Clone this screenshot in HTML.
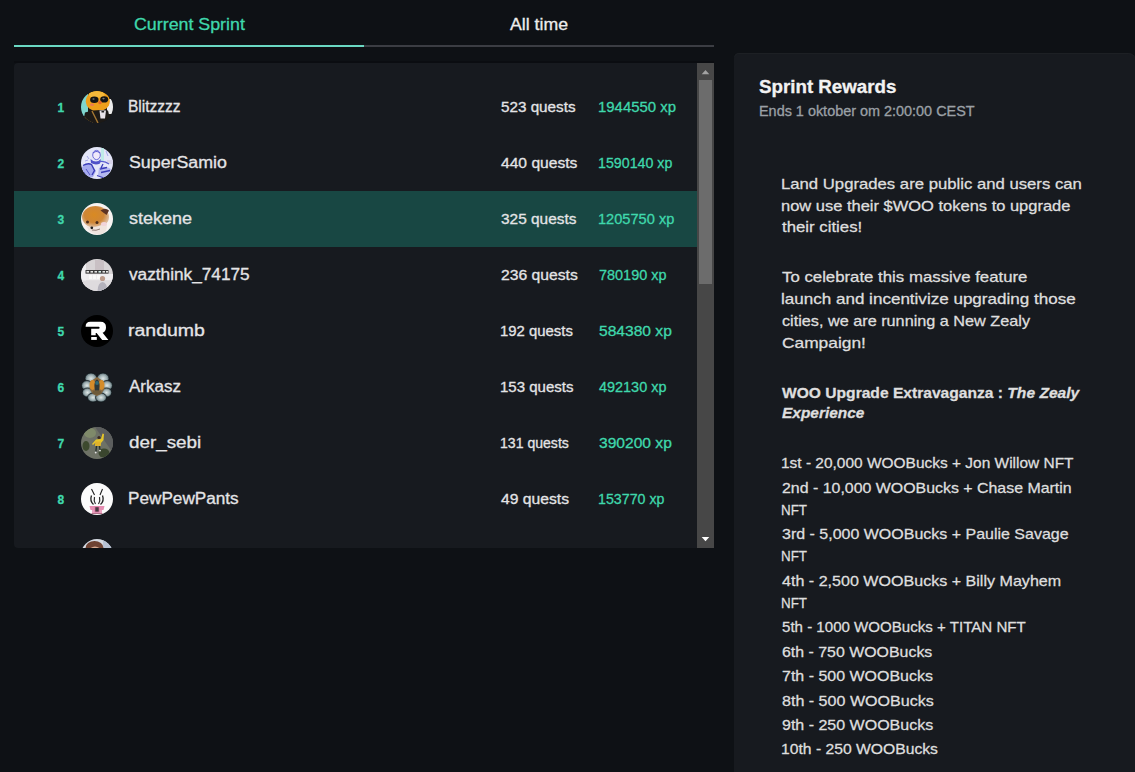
<!DOCTYPE html>
<html><head><meta charset="utf-8">
<style>
*{box-sizing:border-box;margin:0;padding:0}
html,body{width:1135px;height:772px;overflow:hidden;background:#0e1115;font-family:"Liberation Sans",sans-serif;color:#e4e4e6}
.t{position:absolute;white-space:pre;transform-origin:0 0;-webkit-text-stroke:0.3px currentColor}
.tab{font-size:17px;line-height:20px}
.ul{position:absolute;top:45px;height:2px}
.board{position:absolute;left:14px;top:63px;width:700px;height:485px;background:#171a1f;overflow:hidden;border-radius:4px 0 0 4px}
.hl{position:absolute;left:0;top:128px;width:683px;height:56px;background:#184743}
.rank{font-size:12px;font-weight:bold;color:#3fd8ac;line-height:14px}
.av{position:absolute;left:67px;width:32px;height:32px}
.av svg{display:block}
.name{font-size:16px;line-height:18px}
.q{font-size:15px;line-height:17px}
.xp{font-size:15px;line-height:17px;color:#3fd8ac}
.sb{position:absolute;left:683px;top:0;width:17px;height:485px;background:#474747}
.thumb{position:absolute;left:2px;top:17px;width:13px;height:204px;background:#6c6c6c}
.rp{position:absolute;left:734px;top:53px;box-shadow:inset 0 1px 0 #1d2024;width:402px;height:760px;background:#171a1f;border-radius:5px 8px 8px 8px}
.rt{font-size:18px;font-weight:bold;color:#f2f2f2;line-height:20px}
.rs{font-size:14px;color:#9ba0a6;line-height:16px}
.bl{font-size:15px;line-height:17px;color:#dedede}
</style></head><body>

<div class="t tab" style="left:133.7px;top:14.5px;color:#3fd8ac;transform:scaleX(1.047704081632653)">Current Sprint</div>
<div class="t tab" style="left:509.6px;top:14.5px;color:#ececec;transform:scaleX(1.0404905777795066)">All time</div>
<div class="ul" style="left:14px;width:350px;background:#6ad8c2"></div><div class="ul" style="left:364px;width:350px;background:#3b3d43"></div>
<div style="position:absolute;left:14px;top:61px;width:700px;height:2px;background:#0b0d11"></div>
<div class="board"><div class="hl"></div>
<div class="t rank" style="left:43.5px;top:37.6px">1</div>
<div class="av" style="top:28px"><svg width="32" height="32" viewBox="0 0 32 32"><defs><clipPath id="c1"><circle cx="16" cy="16" r="16"/></clipPath></defs><g clip-path="url(#c1)">
<rect width="32" height="32" fill="#1c1a18"/>
<rect x="0" y="3" width="7" height="22" fill="#7fd6cf"/>
<rect x="26" y="8" width="6" height="15" fill="#ececec"/>
<ellipse cx="16.8" cy="10.2" rx="12" ry="10.2" fill="#ee9f1a"/>
<ellipse cx="15.5" cy="3.5" rx="8" ry="3.5" fill="#f4b83a"/>
<ellipse cx="13.3" cy="8.8" rx="4.2" ry="3.2" fill="#141414"/>
<ellipse cx="23.2" cy="8.4" rx="4" ry="3.1" fill="#141414"/>
<ellipse cx="12.5" cy="8" rx="1.2" ry="0.8" fill="#777"/>
<ellipse cx="22.5" cy="7.6" rx="1.2" ry="0.8" fill="#777"/>
<circle cx="19" cy="11.5" r="1.8" fill="#e3652a"/>
<ellipse cx="11" cy="13.8" rx="2" ry="1.3" fill="#ec7a52"/>
<path d="M2 32 L4 21.5 Q14 18 27 19.5 L30 32Z" fill="#1d1a17"/>
<path d="M11 20 L17 32" stroke="#a87a34" stroke-width="1.4" fill="none"/>
<path d="M18.5 19.5 H25 L24 27.5 H19.5Z" fill="#e9e4e8"/>
<rect x="20.5" y="20" width="2.6" height="1.5" fill="#222"/>
<path d="M3 26 Q7 31 12 32" stroke="#c8963e" stroke-width="1.2" fill="none"/>
</g></svg></div>
<div class="t name" style="left:113.6px;top:34.5px;transform:scaleX(0.9702507971399237)">Blitzzzz</div>
<div class="t q" style="left:487.0px;top:34.6px;transform:scaleX(1.01515170760873)">523 quests</div>
<div class="t xp" style="left:584.4px;top:34.6px;transform:scaleX(0.9950090265958104)">1944550 xp</div>
<div class="t rank" style="left:43.5px;top:93.6px">2</div>
<div class="av" style="top:84px"><svg width="32" height="32" viewBox="0 0 32 32"><defs><clipPath id="c2"><circle cx="16" cy="16" r="16"/></clipPath></defs><g clip-path="url(#c2)">
<rect width="32" height="32" fill="#e4e6f8"/>
<rect x="20" y="1" width="3" height="13" fill="#bfeae8"/>
<rect x="26" y="13" width="6" height="4" fill="#d8d4ea"/>
<ellipse cx="15.5" cy="8" rx="3.8" ry="4.6" fill="#f0eafa" stroke="#6c6cd8" stroke-width="1"/>
<path d="M12 6 Q15.5 3 19 6" stroke="#5a5ad0" stroke-width="1.2" fill="none"/>
<path d="M9.5 12 Q15 17 20 12 L19 16.5 Q14.5 18.5 10 16Z" fill="#4e50c8"/>
<path d="M1 20 Q6 15.5 10 17 L15 24 L12 30 L4 32 L1 32Z" fill="#a6aaee"/>
<path d="M2 18.5 Q7 15.5 10.5 17.5 L13.5 23.5 L11 28" stroke="#3a3cb8" stroke-width="1.4" fill="none"/>
<path d="M5 22 L9 28 M3 25 L6 31" stroke="#5456c8" stroke-width="1"/>
<path d="M17 15 Q23 13 28 17" stroke="#5a5cd0" stroke-width="1.1" fill="none"/>
<path d="M18 21 Q24 18 30 22 L28 29 Q22 32 17 28Z" fill="#b4b8f0"/>
<path d="M19 22 L26 20.5 M20 25.5 L29 23.5 M16 28.5 L23 31 M22 17 L20 21" stroke="#3a3cb8" stroke-width="1.3"/>
<path d="M6 9 L8 12 M25 4 L27 9 M4 14 L7 13" stroke="#9c9ee6" stroke-width="0.9"/>
</g></svg></div>
<div class="t name" style="left:114.6px;top:90.5px;transform:scaleX(1.1117678134958178)">SuperSamio</div>
<div class="t q" style="left:487.0px;top:90.6px;transform:scaleX(1.0410958904109588)">440 quests</div>
<div class="t xp" style="left:584.4px;top:90.6px;transform:scaleX(0.948051948051948)">1590140 xp</div>
<div class="t rank" style="left:43.5px;top:149.6px">3</div>
<div class="av" style="top:140px"><svg width="32" height="32" viewBox="0 0 32 32"><defs><clipPath id="c3"><circle cx="16" cy="16" r="16"/></clipPath><radialGradient id="g3" cx="0.45" cy="0.4" r="0.55"><stop offset="0" stop-color="#d98a22"/><stop offset="0.65" stop-color="#cf8636"/><stop offset="1" stop-color="#dcb896"/></radialGradient></defs><g clip-path="url(#c3)">
<rect width="32" height="32" fill="#f7f3f1"/>
<ellipse cx="14.5" cy="14" rx="13.5" ry="11" fill="url(#g3)"/>
<path d="M19.5 7.5 Q24 4 28 7.5 L25.5 12Z" fill="#5d3322"/>
<path d="M5 23 Q14 26 25 20 Q28 27 21 31 Q10 33 5 23Z" fill="#efe4de"/>
<ellipse cx="23" cy="21" rx="3" ry="2" fill="#f1d4da"/>
<circle cx="6.5" cy="19" r="1.5" fill="#4a2b1a"/><circle cx="16" cy="19.5" r="1.5" fill="#4a2b1a"/>
<circle cx="10.8" cy="24.8" r="1.4" fill="#1d1d1d"/>
<path d="M11 27 Q15 28 19 26" stroke="#6a5048" stroke-width="0.7" fill="none"/>
</g></svg></div>
<div class="t name" style="left:114.6px;top:146.5px;transform:scaleX(1.1247646790550276)">stekene</div>
<div class="t q" style="left:487.0px;top:146.6px;transform:scaleX(1.0275799411523998)">325 quests</div>
<div class="t xp" style="left:584.4px;top:146.6px;transform:scaleX(0.9738573407202216)">1205750 xp</div>
<div class="t rank" style="left:43.5px;top:205.6px">4</div>
<div class="av" style="top:196px"><svg width="32" height="32" viewBox="0 0 32 32"><defs><clipPath id="c4"><circle cx="16" cy="16" r="16"/></clipPath></defs><g clip-path="url(#c4)">
<rect width="32" height="32" fill="#d8d4d6"/>
<rect x="0" y="0" width="5" height="32" fill="#f0eff2"/>
<rect x="14" y="1" width="9" height="10" fill="#c9c0c4"/>
<rect x="5" y="15" width="27" height="6.5" fill="#efedf0"/>
<rect x="0" y="21.5" width="32" height="11" fill="#dedbde"/>
<rect x="4.5" y="11" width="23" height="3.6" fill="#3b3a3c"/>
<rect x="5.5" y="12" width="2.5" height="1.6" fill="#e6e6e6"/><rect x="9.5" y="12" width="2.5" height="1.6" fill="#e6e6e6"/><rect x="13.5" y="12" width="2.5" height="1.6" fill="#e6e6e6"/><rect x="17.5" y="12" width="2.5" height="1.6" fill="#d6eeea"/><rect x="21.5" y="12" width="2.5" height="1.6" fill="#e6e6e6"/><rect x="25" y="12" width="2" height="1.6" fill="#e6e6e6"/>
<rect x="8" y="16" width="3" height="4" fill="#fafafa"/><rect x="12" y="16" width="3" height="4" fill="#fafafa"/><rect x="16" y="16" width="3" height="4" fill="#fafafa"/>
<circle cx="21.5" cy="19.5" r="2.6" fill="#bc9a8a"/>
<path d="M16.5 32 Q17 23.5 21.5 23 Q26 23.5 26.5 32Z" fill="#b4b2bc"/>
</g></svg></div>
<div class="t name" style="left:114.6px;top:202.5px;transform:scaleX(1.0759854819626258)">vazthink_74175</div>
<div class="t q" style="left:487.0px;top:202.6px;transform:scaleX(1.0453933566965388)">236 quests</div>
<div class="t xp" style="left:585.4px;top:202.6px;transform:scaleX(0.9629087342822503)">780190 xp</div>
<div class="t rank" style="left:43.5px;top:261.6px">5</div>
<div class="av" style="top:252px"><svg width="32" height="32" viewBox="0 0 32 32"><circle cx="16" cy="16" r="16" fill="#000"/>
<path d="M4.6 11.7 Q4.6 6.8 9.5 6.8 H19.5 Q25 6.8 25 12.3 Q25 16.6 21.6 17.7 L27.4 24.9 H21.2 L15.6 17.9 H14.7 V20.3 H10.2 V13.8 H17.6 Q18.6 13.8 18.6 12.75 Q18.6 11.7 17.6 11.7 Z" fill="#fff"/>
<rect x="10.2" y="22" width="5.6" height="2.9" fill="#fff"/>
</svg></div>
<div class="t name" style="left:113.6px;top:258.5px;transform:scaleX(1.2180090075802825)">randumb</div>
<div class="t q" style="left:486.0px;top:258.6px;transform:scaleX(0.9934900493816834)">192 quests</div>
<div class="t xp" style="left:585.4px;top:258.6px;transform:scaleX(1.0395923115721075)">584380 xp</div>
<div class="t rank" style="left:43.5px;top:317.6px">6</div>
<div class="av" style="top:308px"><svg width="32" height="32" viewBox="0 0 32 32"><defs><radialGradient id="p6" cx="0.5" cy="0.5" r="0.6"><stop offset="0" stop-color="#dfe7e6"/><stop offset="0.5" stop-color="#9fb0b3"/><stop offset="1" stop-color="#33444c"/></radialGradient></defs>
<g fill="url(#p6)" stroke="#0a1316" stroke-width="0.7">
<ellipse cx="10" cy="7.5" rx="6" ry="5.5"/><ellipse cx="22" cy="7.5" rx="6" ry="5.5"/>
<ellipse cx="6" cy="14.5" rx="5.5" ry="5"/><ellipse cx="26" cy="14.5" rx="5.5" ry="5"/>
<ellipse cx="6.5" cy="21.5" rx="5.2" ry="4.6"/><ellipse cx="25.5" cy="21.5" rx="5.2" ry="4.6"/>
<ellipse cx="12" cy="26.5" rx="5.5" ry="4.5"/><ellipse cx="20" cy="26.5" rx="5.5" ry="4.5"/>
</g>
<path d="M16 6 L22 10 L23.5 18 L20 23 L16 25 L12 23 L8.5 18 L10 10Z" fill="#8a6a40"/>
<ellipse cx="11.5" cy="14" rx="3" ry="5" fill="#d48c2a"/>
<ellipse cx="20.5" cy="14" rx="3" ry="5" fill="#d48c2a"/>
<ellipse cx="16" cy="15" rx="2.6" ry="6.5" fill="#2e3838"/>
<circle cx="16" cy="12" r="1.9" fill="#2f6a78"/>
<ellipse cx="16" cy="21.5" rx="4.5" ry="2.2" fill="#6d5a3a"/>
</svg></div>
<div class="t name" style="left:114.6px;top:314.5px;transform:scaleX(1.0612244897959184)">Arkasz</div>
<div class="t q" style="left:486.0px;top:314.6px;transform:scaleX(1.0011636687669432)">153 quests</div>
<div class="t xp" style="left:585.4px;top:314.6px;transform:scaleX(0.9627004927739712)">492130 xp</div>
<div class="t rank" style="left:43.5px;top:373.6px">7</div>
<div class="av" style="top:364px"><svg width="32" height="32" viewBox="0 0 32 32"><defs><clipPath id="c7"><circle cx="16" cy="16" r="16"/></clipPath></defs><g clip-path="url(#c7)">
<rect width="32" height="32" fill="#6e7266"/>
<path d="M14 0 H32 V26 Z" fill="#5c5e5e"/>
<ellipse cx="9" cy="6" rx="6" ry="5" fill="#7f8a6a"/>
<ellipse cx="5" cy="19" rx="3.5" ry="5" fill="#3d4a2e"/>
<ellipse cx="23" cy="26" rx="5.5" ry="4.5" fill="#3a462e"/>
<path d="M11 17 L15 12.5 L20 12 L21.5 6.5 L23 7 L22.5 13 L20 16 L19.5 19 L14 19 L14.5 15.5 L12 18Z" fill="#e6c62a"/>
<rect x="14.5" y="14.5" width="5" height="4.5" fill="#e0b22a"/>
<path d="M15.5 19 L14.8 25 M18.5 19 L19 23" stroke="#25302a" stroke-width="1.3"/>
<circle cx="14.7" cy="25.5" r="0.9" fill="#e6e6e6"/><circle cx="19" cy="23.6" r="0.9" fill="#e6e6e6"/>
<circle cx="18" cy="10.5" r="1.6" fill="#3a2a22"/>
</g></svg></div>
<div class="t name" style="left:114.6px;top:370.5px;transform:scaleX(1.175403111310808)">der_sebi</div>
<div class="t q" style="left:486.0px;top:370.6px;transform:scaleX(0.937757243989231)">131 quests</div>
<div class="t xp" style="left:585.4px;top:370.6px;transform:scaleX(1.0395923115721075)">390200 xp</div>
<div class="t rank" style="left:43.5px;top:429.6px">8</div>
<div class="av" style="top:420px"><svg width="32" height="32" viewBox="0 0 32 32"><circle cx="16" cy="16" r="16" fill="#fbfbfb"/>
<path d="M10.5 6 L13.5 12 M21.5 6 L19 12" stroke="#1e1e1e" stroke-width="1.1" fill="none"/>
<path d="M10.5 12.5 Q8.5 18 12.5 21.5" stroke="#222" stroke-width="1.3" fill="none"/>
<path d="M21.5 12.5 Q23.5 18 19.5 21.5" stroke="#222" stroke-width="1.3" fill="none"/>
<path d="M13.5 14 Q12.5 18 14.5 21 M18.5 14 Q19.5 18 17.5 21" stroke="#2a2a2a" stroke-width="1.2" fill="none"/>
<path d="M8.5 23 H23.5 L22.5 27 H9.5Z" fill="#e48db1"/>
<path d="M11 27 H21 V30 H11Z" fill="#eaa2c0"/>
<rect x="13.5" y="23.5" width="5" height="6" fill="#d97aa3"/>
<rect x="14.3" y="24.2" width="3.4" height="4.4" fill="#4a3a40"/>
<rect x="10.5" y="30" width="11" height="1" fill="#b07088"/>
</svg></div>
<div class="t name" style="left:113.6px;top:426.5px;transform:scaleX(1.0729719236048754)">PewPewPants</div>
<div class="t q" style="left:487.0px;top:426.6px;transform:scaleX(1.0461538461538462)">49 quests</div>
<div class="t xp" style="left:584.4px;top:426.6px;transform:scaleX(0.9480915127189568)">153770 xp</div>
<div class="av" style="top:476px"><svg width="32" height="32" viewBox="0 0 32 32"><defs><clipPath id="c9"><circle cx="16" cy="16" r="16"/></clipPath></defs><g clip-path="url(#c9)">
<rect width="32" height="32" fill="#d6dae2"/>
<rect x="22" y="0" width="10" height="14" fill="#b8c2d4"/>
<ellipse cx="13.5" cy="9" rx="9" ry="7" fill="#6e4232"/>
<ellipse cx="14" cy="15.5" rx="7.5" ry="8" fill="#d9aa90"/>
</g></svg></div>
<div class="sb"><div class="thumb"></div>
<svg style="position:absolute;left:0;top:0" width="17" height="17"><path d="M4.7 11.2 L12.3 11.2 L8.5 6.9Z" fill="#a3a3a3"/></svg>
<svg style="position:absolute;left:0;top:468px" width="17" height="17"><path d="M4.7 5.9 L12.3 5.9 L8.5 10.2Z" fill="#ffffff"/></svg>
</div></div>
<div class="rp">
<div class="t rt" style="left:24.8px;top:23.6px;transform:scaleX(1.0409751931135558)">Sprint Rewards</div>
<div class="t rs" style="left:24.5px;top:49.7px;transform:scaleX(1.0298481026647521)">Ends 1 oktober om 2:00:00 CEST</div>
<div class="t bl" style="left:47.4px;top:121.7px;transform:scaleX(1.1133984150840195)">Land Upgrades are public and users can</div>
<div class="t bl" style="left:47.4px;top:143.6px;transform:scaleX(1.0984996271277716)">now use their $WOO tokens to upgrade</div>
<div class="t bl" style="left:48.4px;top:165.4px;transform:scaleX(1.1185223906892712)">their cities!</div>
<div class="t bl" style="left:48.4px;top:215.2px;transform:scaleX(1.119205093175264)">To celebrate this massive feature</div>
<div class="t bl" style="left:47.4px;top:237.0px;transform:scaleX(1.1360524516627672)">launch and incentivize upgrading those</div>
<div class="t bl" style="left:48.4px;top:259.1px;transform:scaleX(1.081753133208591)">cities, we are running a New Zealy</div>
<div class="t bl" style="left:48.4px;top:280.9px;transform:scaleX(1.1558562560128636)">Campaign!</div>
<div class="t bl" style="left:48.4px;top:330.5px;transform:scaleX(1.0397352602237513)"><b>WOO Upgrade Extravaganza : <i>The Zealy</i></b></div>
<div class="t bl" style="left:48.4px;top:351.4px;transform:scaleX(1.0289089773976352)"><b><i>Experience</i></b></div>
<div class="t bl" style="left:47.4px;top:400.8px;transform:scaleX(1.0307547805985344)">1st - 20,000 WOOBucks + Jon Willow NFT</div>
<div class="t bl" style="left:48.4px;top:425.8px;transform:scaleX(1.0608336600755284)">2nd - 10,000 WOOBucks + Chase Martin</div>
<div class="t bl" style="left:47.4px;top:447.9px;transform:scaleX(0.8928571428571429)">NFT</div>
<div class="t bl" style="left:48.4px;top:471.8px;transform:scaleX(1.065812884025984)">3rd - 5,000 WOOBucks + Paulie Savage</div>
<div class="t bl" style="left:47.4px;top:493.9px;transform:scaleX(0.8928571428571429)">NFT</div>
<div class="t bl" style="left:48.4px;top:519.2px;transform:scaleX(1.0715550359731585)">4th - 2,500 WOOBucks + Billy Mayhem</div>
<div class="t bl" style="left:47.4px;top:541.0px;transform:scaleX(0.8928571428571429)">NFT</div>
<div class="t bl" style="left:48.4px;top:565.2px;transform:scaleX(1.0054182634887505)">5th - 1000 WOOBucks + TITAN NFT</div>
<div class="t bl" style="left:48.4px;top:589.9px;transform:scaleX(1.0606660637708796)">6th - 750 WOOBucks</div>
<div class="t bl" style="left:48.4px;top:614.0px;transform:scaleX(1.0648258954925076)">7th - 500 WOOBucks</div>
<div class="t bl" style="left:48.4px;top:638.8px;transform:scaleX(1.0711475231039216)">8th - 500 WOOBucks</div>
<div class="t bl" style="left:48.4px;top:662.9px;transform:scaleX(1.0669595147513924)">9th - 250 WOOBucks</div>
<div class="t bl" style="left:47.4px;top:686.7px;transform:scaleX(1.0456721349764397)">10th - 250 WOOBucks</div>
</div>
</body></html>
